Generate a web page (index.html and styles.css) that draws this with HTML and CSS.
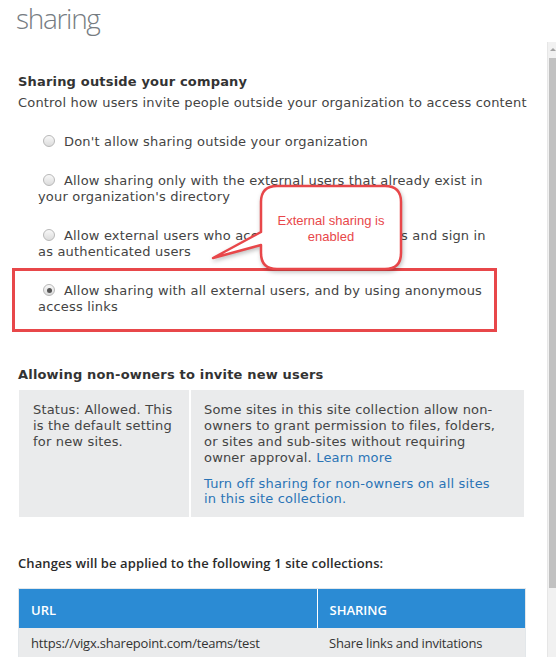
FILE: index.html
```html
<!DOCTYPE html>
<html lang="en">
<head>
<meta charset="utf-8">
<title>sharing</title>
<link rel="stylesheet" href="styles.css">
</head>
<body>
<div class="page">
  <h1 class="title">sharing</h1>

  <section class="section">
    <h2 class="sec-head">Sharing outside your company</h2>
    <p class="sec-desc">Control how users invite people outside your organization to access content</p>

    <div class="options">
      <div class="opt"><span class="radio"></span>Don't allow sharing outside your organization</div>
      <div class="opt"><span class="radio"></span>Allow sharing only with the external users that already exist in your organization's directory</div>
      <div class="opt"><span class="radio"></span>Allow external users who accept sharing invitations and sign in as authenticated users</div>
      <div class="highlight">
        <div class="opt"><span class="radio checked"></span>Allow sharing with all external users, and by using anonymous access links</div>
      </div>
    </div>
  </section>

  <section class="section invite">
    <h2 class="sec-head">Allowing non-owners to invite new users</h2>
    <div class="info">
      <div class="info-status">Status: Allowed. This is the default setting for new sites.</div>
      <div class="info-detail">
        <p>Some sites in this site collection allow non-owners to grant permission to files, folders, or sites and sub-sites without requiring owner approval. <a href="#">Learn more</a></p>
        <p class="info-link"><a href="#">Turn off sharing for non-owners on all sites in this site collection.</a></p>
      </div>
    </div>
  </section>

  <section class="section changes">
    <h3 class="changes-head">Changes will be applied to the following 1 site collections:</h3>
    <table class="sites">
      <thead>
        <tr><th class="col-url">URL</th><th>SHARING</th></tr>
      </thead>
      <tbody>
        <tr><td>https://vigx.sharepoint.com/teams/test</td><td>Share links and invitations</td></tr>
      </tbody>
    </table>
  </section>

  <div class="callout">
    <svg class="callout-shape" width="200" height="92" viewBox="0 0 200 92">
      <path d="M72 3 H180 Q196 3 196 19 V70 Q196 86 180 86 H72 Q56 86 56 70 V62 L8 75 L56 49 V19 Q56 3 72 3 Z" fill="#ffffff" stroke="#e8474a" stroke-width="2.5" stroke-linejoin="round"/>
    </svg>
    <div class="callout-text">External sharing is<br>enabled</div>
  </div>

  <div class="scrollbar">
    <div class="scroll-arrow"></div>
    <div class="scroll-thumb"></div>
  </div>
</div>
</body>
</html>
```

FILE: styles.css
```css
html, body {
  margin: 0;
  padding: 0;
  background: #ffffff;
}

.page {
  position: relative;
  width: 556px;
  height: 657px;
  overflow: hidden;
  font-family: "DejaVu Sans", Verdana, sans-serif;
  font-size: 13px;
  line-height: 16px;
  letter-spacing: 0.18px;
  color: #444444;
}

.title {
  margin: 0;
  padding: 0 0 0 16px;
  height: 37px;
  font-family: "Open Sans", "Segoe UI", sans-serif;
  font-weight: 300;
  font-size: 28px;
  line-height: 36px;
  color: #767c82;
  letter-spacing: -1.3px;
}

.section {
  padding-left: 18px;
}

.sec-head {
  margin: 37px 0 5px 0;
  font-size: 13px;
  line-height: 16px;
  font-weight: bold;
  color: #333333;
}

.sec-desc {
  margin: 0;
}

.options {
  width: 482px;
  padding-top: 23px;
}

.opt {
  padding-left: 20px;
  margin-bottom: 23px;
}

.radio {
  display: inline-block;
  box-sizing: border-box;
  width: 12px;
  height: 12px;
  margin: 0 9px 0 5px;
  border-radius: 50%;
  border: 1px solid #b8b8b8;
  background: linear-gradient(#f8f8f8, #dcdcdc);
  vertical-align: -1px;
  position: relative;
}

.radio.checked::after {
  content: "";
  position: absolute;
  left: 2.5px;
  top: 2.5px;
  width: 5px;
  height: 5px;
  border-radius: 50%;
  background: #555555;
}

.highlight {
  margin: -15px 0 0 -6px;
  width: 485px;
  box-sizing: border-box;
  border: 3px solid #e8474a;
  padding: 12px 0 14px 0;
}

.highlight .opt {
  padding-left: 23px;
  margin-bottom: 0;
}

.invite .sec-head {
  margin-top: 35px;
  margin-bottom: 7px;
}

.info {
  display: grid;
  grid-template-columns: 170px 333px;
  column-gap: 2px;
  margin-left: 1px;
}

.info-status,
.info-detail {
  background: #eaebec;
  padding: 12px 14px 11px 14px;
}

.info-detail {
  padding-left: 13px;
  padding-right: 18px;
}

.info-detail p {
  margin: 0;
}

.info-detail .info-link {
  margin-top: 10px;
  line-height: 15px;
}

.info a {
  color: #2a74b6;
  text-decoration: none;
}

.changes-head {
  margin: 38px 0 18px 0;
  font-family: "Open Sans", "Segoe UI", sans-serif;
  font-weight: 600;
  font-size: 13px;
  line-height: 16px;
  letter-spacing: 0.1px;
  color: #2b2b2b;
}

.sites {
  margin-left: 1px;
  width: 506px;
  border-collapse: collapse;
  font-family: "Open Sans", "Segoe UI", sans-serif;
  font-size: 13px;
  letter-spacing: normal;
  outline: 1px solid #e3e7ea;
}

.sites th {
  background: #2b8bd4;
  color: #ffffff;
  font-weight: 600;
  text-align: left;
  height: 39px;
  padding: 3px 12px 0 12px;
  box-sizing: border-box;
}

.sites th.col-url {
  width: 298px;
  border-right: 1px solid #ffffff;
}

.sites td {
  background: #eaebec;
  color: #333333;
  height: 28px;
  padding: 7px 12px 0 12px;
  vertical-align: top;
  letter-spacing: -0.2px;
}

.callout {
  position: absolute;
  left: 205px;
  top: 183px;
  width: 200px;
  height: 92px;
  letter-spacing: normal;
}

.callout-shape {
  display: block;
  filter: drop-shadow(1px 2px 2px rgba(0, 0, 0, 0.25));
}

.callout-text {
  position: absolute;
  left: 56px;
  width: 140px;
  top: 30px;
  text-align: center;
  font-family: "Liberation Sans", Arial, sans-serif;
  font-size: 13px;
  line-height: 16px;
  color: #e8474a;
}

.scrollbar {
  position: absolute;
  left: 547px;
  top: 42px;
  width: 9px;
  bottom: 0;
  background: #f1f1f1;
  border-left: 1px solid #e6e6e6;
}

.scroll-arrow {
  height: 16px;
  position: relative;
}

.scroll-arrow::after {
  content: "";
  position: absolute;
  left: 2px;
  top: 6px;
  border-left: 3px solid transparent;
  border-right: 3px solid transparent;
  border-bottom: 3px solid #a3a3a3;
}

.scroll-thumb {
  margin-left: 1px;
  height: 530px;
  background: #c1c1c1;
}
```
